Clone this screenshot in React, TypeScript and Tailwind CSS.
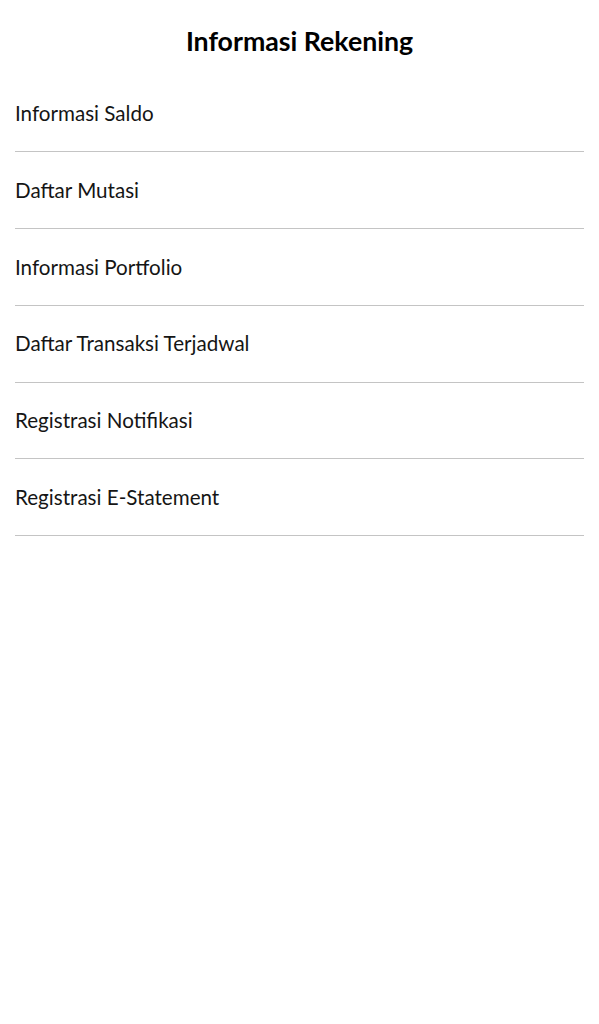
import React from "react";

const items = [
  "Informasi Saldo",
  "Daftar Mutasi",
  "Informasi Portfolio",
  "Daftar Transaksi Terjadwal",
  "Registrasi Notifikasi",
  "Registrasi E-Statement",
];

export default function App() {
  return (
    <div className="min-h-screen w-full bg-white text-[#111] font-['Lato','Liberation_Sans',sans-serif]">
      {/* Header */}
      <div className="h-[75.5px] pt-[6px] flex items-center justify-center">
        <h1 className="text-[26.7px] font-bold text-black">Informasi Rekening</h1>
      </div>

      {/* Menu list */}
      <div className="px-[15px]">
        {items.map((label) => (
          <div
            key={label}
            className="h-[76.8px] flex items-center border-b border-[#c4c4c4] cursor-pointer"
          >
            <span className="text-[20.6px] text-[#151515]">{label}</span>
          </div>
        ))}
      </div>
    </div>
  );
}
